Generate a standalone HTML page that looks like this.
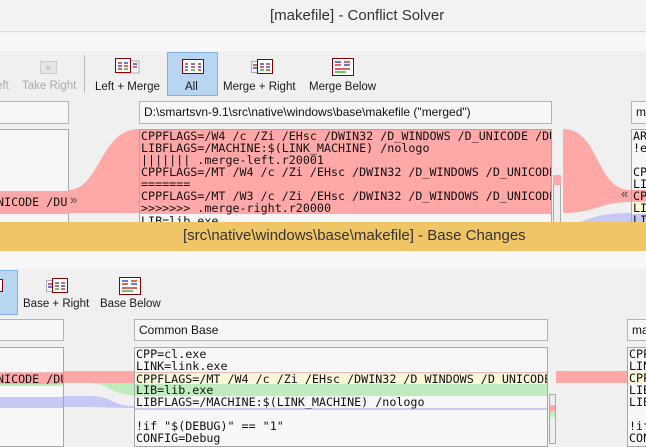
<!DOCTYPE html>
<html><head><meta charset="utf-8"><style>
*{margin:0;padding:0;box-sizing:border-box}
body{width:646px;height:442px;overflow:hidden;background:#f0f0f0;font-family:"Liberation Sans",sans-serif;position:relative}
.a{position:absolute}
.ui{font-size:11.5px;color:#1a1a1a;white-space:nowrap}
.fld{position:absolute;background:#f7f7f7;border:1px solid #b4b4b4;font-size:12px;padding:3px 4px;white-space:nowrap;overflow:hidden;color:#111}
.ed{position:absolute;background:#f7f7f7;border:1px solid #a8a8a8;overflow:hidden}
.m{font-family:"DejaVu Sans Mono","Liberation Mono",monospace;font-size:11.7px;line-height:12px;white-space:pre;color:#111}
.ln{position:absolute;left:0;right:0;height:12px;padding-left:1px}
</style></head><body>
<div class="a" style="left:0;top:0;width:646px;height:32px;background:#f3f3f3;border-bottom:1px solid #dcdcdc"></div>
<div class="a" style="left:270px;top:7px;font-size:15px;color:#333">[makefile] - Conflict Solver</div>
<div class="a" style="left:0;top:33px;width:646px;height:18px;background:#f7f7f7"></div>
<div class="a ui" style="left:-4px;top:80px;color:#aaa">eft</div>
<div class="a" style="left:40px;top:61px;width:17px;height:13px;border:1px solid #ccc;background:#e4e4e4;font-size:9px;color:#aaa;text-align:center;line-height:11px">«</div>
<div class="a ui" style="left:22px;top:80px;color:#aaa">Take Right</div>
<div class="a" style="left:84px;top:55px;width:1px;height:38px;background:#bbb"></div>
<div class="a" style="left:167px;top:52px;width:51px;height:44px;background:#b8d5f1;border:1px solid #7eb2e4"></div>
<svg class="a" style="left:115px;top:58px" width="25" height="16"><rect x="3" y="3" width="21" height="12" fill="#f4f4ff" stroke="#aab" /><rect x="0.5" y="0.5" width="15" height="14" fill="#fff" stroke="#800"/><g stroke-width="1.5"><line x1="3" y1="5" x2="7" y2="5" stroke="#c33"/><line x1="9" y1="5" x2="13" y2="5" stroke="#44c"/><line x1="3" y1="8" x2="7" y2="8" stroke="#44c"/><line x1="9" y1="8" x2="13" y2="8" stroke="#c33"/><line x1="3" y1="11" x2="7" y2="11" stroke="#c33"/><line x1="9" y1="11" x2="13" y2="11" stroke="#4a4"/><line x1="18" y1="6" x2="22" y2="6" stroke="#44c"/><line x1="18" y1="9" x2="22" y2="9" stroke="#c33"/></g></svg>
<svg class="a" style="left:182px;top:59px" width="22" height="15"><rect x="0.5" y="0.5" width="21" height="14" fill="#fff" stroke="#800"/><g stroke-width="1.5"><line x1="3" y1="5" x2="6" y2="5" stroke="#c33"/><line x1="9" y1="5" x2="13" y2="5" stroke="#44c"/><line x1="16" y1="5" x2="19" y2="5" stroke="#c33"/><line x1="3" y1="8" x2="6" y2="8" stroke="#44c"/><line x1="9" y1="8" x2="13" y2="8" stroke="#c33"/><line x1="16" y1="8" x2="19" y2="8" stroke="#44c"/><line x1="3" y1="11" x2="6" y2="11" stroke="#c33"/><line x1="9" y1="11" x2="13" y2="11" stroke="#4a4"/><line x1="16" y1="11" x2="19" y2="11" stroke="#c33"/></g></svg>
<svg class="a" style="left:251px;top:59px" width="22" height="15"><rect x="0.5" y="2.5" width="10" height="11" fill="#f4f4ff" stroke="#aab"/><rect x="6.5" y="0.5" width="15" height="14" fill="#fff" stroke="#800"/><g stroke-width="1.5"><line x1="2" y1="6" x2="6" y2="6" stroke="#c33"/><line x1="2" y1="9" x2="6" y2="9" stroke="#44c"/><line x1="9" y1="5" x2="13" y2="5" stroke="#44c"/><line x1="15" y1="5" x2="19" y2="5" stroke="#c33"/><line x1="9" y1="8" x2="13" y2="8" stroke="#c33"/><line x1="15" y1="8" x2="19" y2="8" stroke="#44c"/><line x1="9" y1="11" x2="13" y2="11" stroke="#4a4"/><line x1="15" y1="11" x2="19" y2="11" stroke="#c33"/></g></svg>
<svg class="a" style="left:332px;top:58px" width="22" height="18"><rect x="0.5" y="0.5" width="21" height="17" fill="#fff" stroke="#800"/><g stroke-width="1.5"><line x1="3" y1="4" x2="9" y2="4" stroke="#44c"/><line x1="12" y1="4" x2="18" y2="4" stroke="#c33"/><line x1="3" y1="7" x2="9" y2="7" stroke="#c33"/><line x1="12" y1="7" x2="18" y2="7" stroke="#44c"/><line x1="3" y1="11" x2="18" y2="11" stroke="#c33"/><line x1="3" y1="14" x2="14" y2="14" stroke="#4a4"/></g></svg>
<div class="a ui" style="left:95px;top:81px">Left + Merge</div>
<div class="a ui" style="left:185px;top:81px">All</div>
<div class="a ui" style="left:223px;top:81px">Merge + Right</div>
<div class="a ui" style="left:309px;top:81px">Merge Below</div>
<div class="fld" style="left:-5px;top:101px;width:74px;height:23px"></div>
<div class="fld" style="left:139px;top:101px;width:413px;height:23px">D:\smartsvn-9.1\src\native\windows\base\makefile ("merged")</div>
<div class="fld" style="left:631px;top:101px;width:30px;height:23px">m</div>
<svg class="a" style="left:0;top:129px" width="646" height="93">
<path d="M68 61 C100 61 100 0 139 0 L139 84 L68 84 Z" fill="#ffa8a8"/>
<path d="M563 0 C600 0 595 61 631 61 L631 73 C600 73 595 84 563 84 Z" fill="#ffa8a8"/>
<path d="M580 93 C600 85 612 84 631 84 L631 93 Z" fill="#c8c8f4"/>
</svg>
<div class="ed" style="left:-5px;top:129px;width:74px;height:95px"><div class="ln m" style="top:61px;height:23px;background:#ffa8a8;padding-top:5px">NICODE /DU</div></div>
<div class="a" style="left:68px;top:190px;width:71px;height:23px;background:#ffa8a8"></div>
<div class="a" style="left:70px;top:192px;font-size:13px;color:#444">»</div>
<div class="ed m" style="left:139px;top:129px;width:413px;height:95px">
<div class="ln" style="top:0;height:84px;background:#ffa8a8"></div>
<div class="ln" style="top:0">CPPFLAGS=/W4 /c /Zi /EHsc /DWIN32 /D_WINDOWS /D_UNICODE /DU</div>
<div class="ln" style="top:12px">LIBFLAGS=/MACHINE:$(LINK_MACHINE) /nologo</div>
<div class="ln" style="top:24px">||||||| .merge-left.r20001</div>
<div class="ln" style="top:36px">CPPFLAGS=/MT /W4 /c /Zi /EHsc /DWIN32 /D_WINDOWS /D_UNICODE</div>
<div class="ln" style="top:48px">=======</div>
<div class="ln" style="top:60px">CPPFLAGS=/MT /W3 /c /Zi /EHsc /DWIN32 /D_WINDOWS /D_UNICODE</div>
<div class="ln" style="top:72px">&gt;&gt;&gt;&gt;&gt;&gt;&gt; .merge-right.r20000</div>
<div class="ln" style="top:85px">LIB=lib.exe</div>
</div>
<div class="a" style="left:553px;top:180px;width:8px;height:44px;background:#eee;border:1px solid #aaa"></div>
<div class="a" style="left:553px;top:175px;width:8px;height:10px;background:#ffa8a8"></div>
<div class="a" style="left:621px;top:186px;font-size:13px;color:#444">«</div>
<div class="ed m" style="left:631px;top:129px;width:30px;height:95px">
<div class="ln" style="top:0">AR</div><div class="ln" style="top:12px">!e</div>
<div class="ln" style="top:36px">CP</div><div class="ln" style="top:48px">LI</div>
<div class="ln" style="top:60px;background:#ffa8a8">CP</div><div class="ln" style="top:72px;background:#fbf5da">LI</div>
<div class="ln" style="top:84px;background:#c8c8f4">LI</div></div>
<div class="a" style="left:0;top:222px;width:646px;height:29px;background:#f0c566"></div>
<div class="a" style="left:183px;top:227px;font-size:15px;color:#333">[src\native\windows\base\makefile] - Base Changes</div>
<div class="a" style="left:0;top:251px;width:646px;height:18px;background:#f7f7f7"></div>
<div class="a" style="left:-5px;top:270px;width:23px;height:45px;background:#b8d5f1;border:1px solid #7eb2e4"></div>
<div class="a" style="left:-3px;top:279px;width:6px;height:13px;border:1px solid #800;background:#fff"></div>
<svg class="a" style="left:46px;top:278px" width="22" height="15"><rect x="0.5" y="2.5" width="10" height="11" fill="#f4f4ff" stroke="#aab"/><rect x="6.5" y="0.5" width="15" height="14" fill="#fff" stroke="#800"/><g stroke-width="1.5"><line x1="2" y1="6" x2="6" y2="6" stroke="#c33"/><line x1="2" y1="9" x2="6" y2="9" stroke="#44c"/><line x1="9" y1="5" x2="13" y2="5" stroke="#44c"/><line x1="15" y1="5" x2="19" y2="5" stroke="#c33"/><line x1="9" y1="8" x2="13" y2="8" stroke="#c33"/><line x1="15" y1="8" x2="19" y2="8" stroke="#44c"/><line x1="9" y1="11" x2="13" y2="11" stroke="#4a4"/><line x1="15" y1="11" x2="19" y2="11" stroke="#c33"/></g></svg>
<svg class="a" style="left:119px;top:277px" width="22" height="18"><rect x="0.5" y="0.5" width="21" height="17" fill="#fff" stroke="#800"/><g stroke-width="1.5"><line x1="3" y1="4" x2="9" y2="4" stroke="#44c"/><line x1="12" y1="4" x2="18" y2="4" stroke="#c33"/><line x1="3" y1="7" x2="9" y2="7" stroke="#c33"/><line x1="12" y1="7" x2="18" y2="7" stroke="#44c"/><line x1="3" y1="11" x2="18" y2="11" stroke="#c33"/><line x1="3" y1="14" x2="14" y2="14" stroke="#4a4"/></g></svg>
<div class="a ui" style="left:23px;top:298px">Base + Right</div>
<div class="a ui" style="left:100px;top:298px">Base Below</div>
<div class="fld" style="left:-5px;top:319px;width:69px;height:22px"></div>
<div class="fld" style="left:134px;top:319px;width:414px;height:22px">Common Base</div>
<div class="fld" style="left:627px;top:319px;width:30px;height:22px">ma</div>
<svg class="a" style="left:0;top:347px" width="646" height="95">
<rect x="63" y="24" width="71" height="12" fill="#ffa8a8"/>
<path d="M63 36 L90 36 C110 36 110 48 134 48 L134 36 Z" fill="#bfecbf"/>
<path d="M63 49 L90 49 C112 49 112 59 134 59 L134 61 C110 61 105 60 63 60 Z" fill="#c8c8f4"/>
<rect x="556" y="24" width="71" height="12" fill="#ffa8a8"/>
</svg>
<div class="ed m" style="left:-5px;top:347px;width:69px;height:100px">
<div class="ln" style="top:24px;background:#ffa8a8;border-top:1px solid #eebbbb">NICODE /DU</div>
<div class="ln" style="top:36px;height:2px;background:#bfecbf"></div>
<div class="ln" style="top:49px;height:11px;background:#c8c8f4"></div></div>
<div class="ed m" style="left:134px;top:347px;width:414px;height:100px">
<div class="ln" style="top:0">CPP=cl.exe</div>
<div class="ln" style="top:12px">LINK=link.exe</div>
<div class="ln" style="top:24px;background:#fbf5d9;border-top:1px solid #eebbbb">CPPFLAGS=/MT /W4 /c /Zi /EHsc /DWIN32 /D_WINDOWS /D_UNICODE</div>
<div class="ln" style="top:36px;background:#bfecbf">LIB=lib.exe</div>
<div class="ln" style="top:48px;border-bottom:2px solid #c8c8f4;height:14px">LIBFLAGS=/MACHINE:$(LINK_MACHINE) /nologo</div>
<div class="ln" style="top:72px">!if "$(DEBUG)" == "1"</div>
<div class="ln" style="top:84px">CONFIG=Debug</div></div>
<div class="a" style="left:549px;top:394px;width:7px;height:50px;background:#eee;border:1px solid #aaa"></div>
<div class="a" style="left:550px;top:405px;width:5px;height:6px;background:#ffa8a8"></div>
<div class="a" style="left:550px;top:411px;width:5px;height:6px;background:#bfecbf"></div>
<div class="ed m" style="left:627px;top:347px;width:30px;height:100px">
<div class="ln" style="top:0">CPP</div><div class="ln" style="top:12px">LIN</div>
<div class="ln" style="top:24px;background:#fbf5d9">CPP</div><div class="ln" style="top:36px">LIB</div>
<div class="ln" style="top:48px">LIB</div><div class="ln" style="top:72px">!if</div><div class="ln" style="top:84px">CON</div></div>
</body></html>
